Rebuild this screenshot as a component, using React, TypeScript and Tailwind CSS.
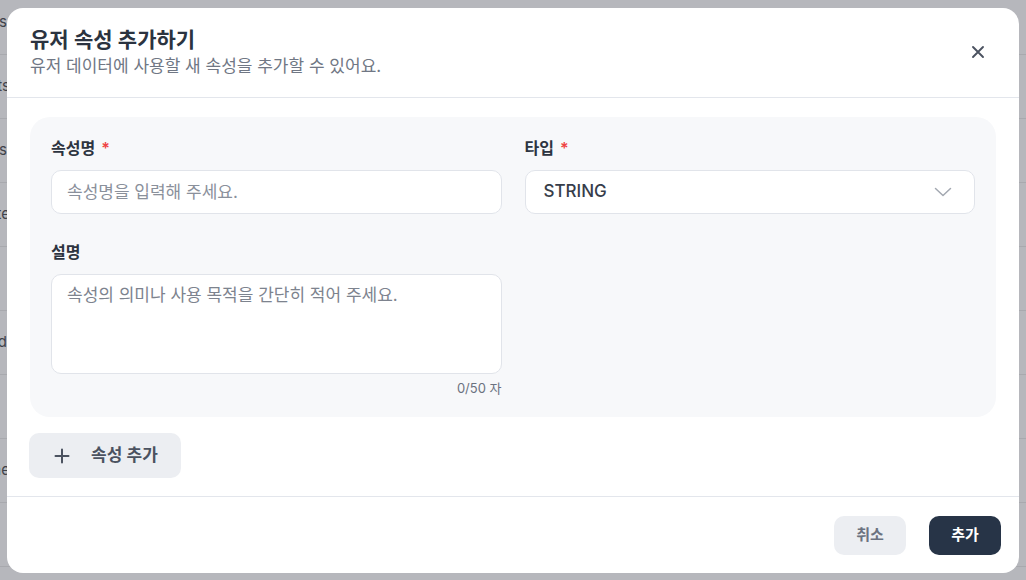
import React from "react";

const bgRows: { t: string; w: number }[] = [
  { t: "Users", w: 7 },
  { t: "Events", w: 10 },
  { t: "Cohorts", w: 7 },
  { t: "Attribute", w: 10 },
  { t: "", w: 7 },
  { t: "Created", w: 7 },
  { t: "", w: 7 },
  { t: "Name", w: 10 },
  { t: "", w: 7 },
  { t: "", w: 7 },
];

function Background() {
  return (
    <div className="absolute inset-0 bg-[#b6b7bc] overflow-hidden">
      <div className="flex flex-col -mt-[9px]">
        {bgRows.map((r, i) => (
          <div key={i} className="h-[64px] border-b border-[#a8a9ae] flex items-center">
            <div
              className="overflow-hidden flex justify-end whitespace-nowrap text-[15px] text-[#3f424a]"
              style={{ width: r.w }}
            >
              <span>{r.t}</span>
            </div>
          </div>
        ))}
      </div>
    </div>
  );
}

function Label({ text, required }: { text: string; required?: boolean }) {
  return (
    <div className="h-[22px] flex items-center mb-[11px] text-[16px] font-semibold text-[#2d3440] leading-[22px]">
      <span>{text}</span>
      {required && <span className="ml-[6px] text-[#ef4444]">*</span>}
    </div>
  );
}

export default function App() {
  const font = { fontFamily: '"Inter", "Noto Sans CJK KR", sans-serif' };
  return (
    <div className="relative w-[1026px] h-[580px] overflow-hidden" style={font}>
      <Background />
      <div className="absolute inset-0 flex items-center justify-center">
        <div className="w-[1012px] h-[565px] bg-white rounded-[16px] flex flex-col overflow-hidden mt-[1px]">
          {/* header */}
          <div className="relative h-[90px] border-b border-[#e3e6ec] px-[23px] pt-[18px]">
            <div className="text-[21px] font-semibold leading-[28px] text-[#2b3340]">유저 속성 추가하기</div>
            <div className="text-[17px] leading-[24px] text-[#707784]">
              유저 데이터에 사용할 새 속성을 추가할 수 있어요.
            </div>
            <button className="absolute right-[34px] top-[37px] w-[14px] h-[14px] flex items-center justify-center text-[#4b5260]">
              <svg width="14" height="14" viewBox="0 0 14 14" fill="none" stroke="currentColor" strokeWidth="1.9" strokeLinecap="round">
                <path d="M2 2L12 12M12 2L2 12" />
              </svg>
            </button>
          </div>

          {/* body */}
          <div className="flex-1 px-[23px] pt-[19px]">
            <div className="bg-[#f7f8fa] rounded-[20px] px-[21px] pt-[20px] pb-[21px]">
              <div className="grid grid-cols-2 gap-x-[23px]">
                <div>
                  <Label text="속성명" required />
                  <input
                    className="w-full h-[44px] rounded-[10px] border border-[#e1e4ea] bg-white px-[15px] text-[17px] text-[#2d3440] placeholder:text-[#8a909b] outline-none"
                    placeholder="속성명을 입력해 주세요."
                  />
                </div>
                <div>
                  <Label text="타입" required />
                  <div className="w-full h-[44px] rounded-[10px] border border-[#e1e4ea] bg-white pl-[18px] pr-[22px] flex items-center justify-between">
                    <span className="text-[17px] text-[#363d4a] font-medium">STRING</span>
                    <svg width="18" height="10" viewBox="0 0 18 10" fill="none" stroke="#a3a8b1" strokeWidth="1.5" strokeLinecap="round" strokeLinejoin="round">
                      <path d="M1.5 1.5L9 8.5L16.5 1.5" />
                    </svg>
                  </div>
                </div>
                <div className="mt-[27px]">
                  <Label text="설명" />
                  <textarea
                    className="block w-full h-[100px] resize-none rounded-[10px] border border-[#e1e4ea] bg-white px-[15px] py-[8px] text-[17px] leading-[24px] text-[#2d3440] placeholder:text-[#7d838e] outline-none"
                    placeholder="속성의 의미나 사용 목적을 간단히 적어 주세요."
                  />
                  <div className="mt-[6px] text-right text-[13px] leading-[16px] text-[#6b7280]">0/50 자</div>
                </div>
              </div>
            </div>
            <button className="mt-[16px] -ml-[1px] h-[45px] w-[152px] rounded-[10px] bg-[#eceef2] flex items-center pl-[25px] text-[#4b5260]">
              <svg width="16" height="16" viewBox="0 0 16 16" fill="none" stroke="currentColor" strokeWidth="2" strokeLinecap="round">
                <path d="M8 1.5V14.5M1.5 8H14.5" />
              </svg>
              <span className="ml-[21px] text-[17px] font-semibold">속성 추가</span>
            </button>
          </div>

          {/* footer */}
          <div className="h-[77px] border-t border-[#e3e6ec] flex items-center justify-end gap-[23px] pr-[18px]">
            <button className="w-[72px] h-[39px] rounded-[10px] bg-[#eceef2] text-[15px] font-semibold text-[#6b7280]">취소</button>
            <button className="w-[72px] h-[39px] rounded-[10px] bg-[#273447] text-[15px] font-semibold text-white">추가</button>
          </div>
        </div>
      </div>
    </div>
  );
}
